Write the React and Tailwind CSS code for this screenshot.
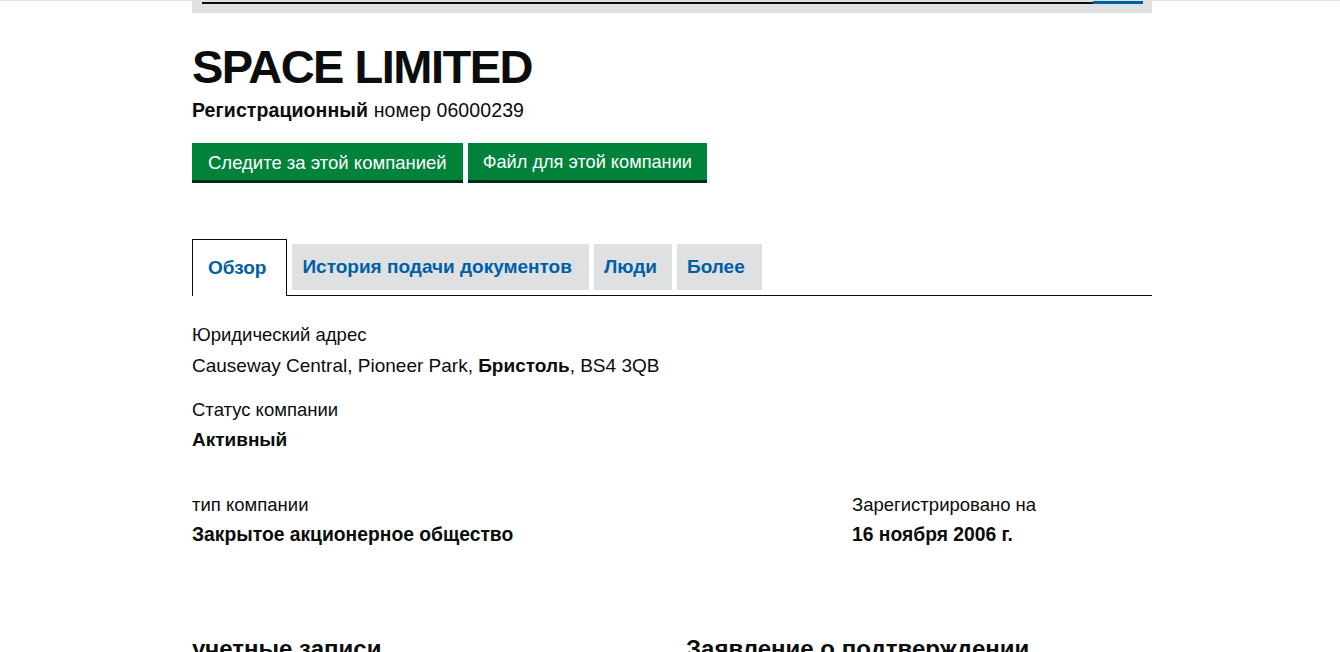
import React from 'react';

const font = { fontFamily: '"Liberation Sans", Arial, sans-serif' };

export default function App() {
  return (
    <div className="min-h-[652px] bg-white text-[#0b0c0c] border-t border-[#dee0e2]" style={font}>
      <div className="w-[960px] ml-[192px]">
        {/* search bar (scrolled off) */}
        <div className="h-[12px] bg-[#dee0e2] pl-[10px] pr-[9px] flex items-start">
          <div className="flex-1 mt-[1px] h-[2px] bg-[#0b0c0c]" />
          <div className="w-[50px] h-[3px] bg-[#005ea5]" />
        </div>

        {/* header */}
        <h1 className="mt-[30px] text-[47px] leading-[47px] font-bold tracking-[-1.5px]">SPACE LIMITED</h1>
        <p className="mt-[8px] text-[19.5px] leading-[25px] tracking-[0.1px]">
          <strong>Регистрационный</strong> номер 06000239
        </p>

        <div className="mt-[20px] flex gap-[5px]">
          <button className="h-[37px] pt-[3px] px-[16px] bg-[#00823b] text-white text-[18.5px] shadow-[0_3px_0_#002d18]">
            Следите за этой компанией
          </button>
          <button className="h-[37px] pt-[3px] px-[15px] bg-[#00823b] text-white text-[18.2px] shadow-[0_3px_0_#002d18]">
            Файл для этой компании
          </button>
        </div>

        {/* tabs */}
        <ul className="mt-[59px] flex items-end gap-[5px] border-b border-[#0b0c0c] text-[19px] font-bold text-[#005ea5]">
          <li className="-mb-px h-[57px] flex items-center pl-[15px] pr-[20px] bg-white border border-b-0 border-[#0b0c0c]">
            Обзор
          </li>
          <li className="mb-[5px] h-[46px] flex items-center pl-[10px] pr-[17px] bg-[#dee0e2]">История подачи документов</li>
          <li className="mb-[5px] h-[46px] flex items-center pl-[10px] pr-[15px] bg-[#dee0e2]">Люди</li>
          <li className="mb-[5px] h-[46px] flex items-center pl-[10px] pr-[17px] bg-[#dee0e2]">Более</li>
        </ul>

        {/* overview */}
        <dl className="mt-[29px] text-[18.5px] leading-[20px]">
          <dt>Юридический адрес</dt>
          <dd className="mt-[11px] text-[19px]">
            Causeway Central, Pioneer Park, <strong>Бристоль</strong>, BS4 3QB
          </dd>
          <dt className="mt-[24px]">Статус компании</dt>
          <dd className="mt-[10px] text-[19px] font-bold">Активный</dd>
        </dl>

        <div className="mt-[45px] grid grid-cols-[660px_1fr] text-[18.5px] leading-[20px]">
          <dl>
            <dt>тип компании</dt>
            <dd className="mt-[10px] text-[19.3px] font-bold">Закрытое акционерное общество</dd>
          </dl>
          <dl>
            <dt>Зарегистрировано на</dt>
            <dd className="mt-[10px] text-[19.3px] font-bold">16 ноября 2006 г.</dd>
          </dl>
        </div>

        <div className="mt-[89px] grid grid-cols-[494px_1fr] text-[24px] leading-[30px] font-bold">
          <h2>учетные записи</h2>
          <h2>Заявление о подтверждении</h2>
        </div>
      </div>
    </div>
  );
}
